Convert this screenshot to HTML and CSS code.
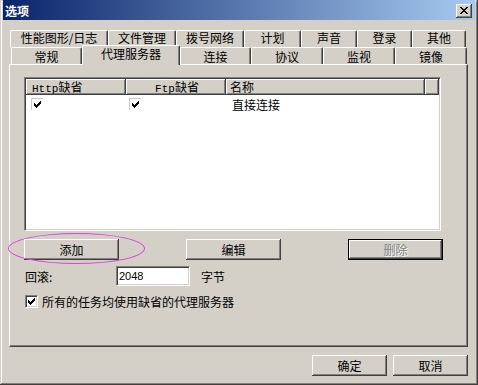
FILE: index.html
```html
<!DOCTYPE html>
<html>
<head>
<meta charset="utf-8">
<link rel="stylesheet" href="styles.css">
</head>
<body>
<div class="window">
  <div class="titlebar">
    <span class="title">选项</span>
    <span class="close">
      <svg width="8" height="7" viewBox="0 0 8 7" shape-rendering="crispEdges">
        <rect x="0" y="0" width="2" height="1"/><rect x="6" y="0" width="2" height="1"/>
        <rect x="1" y="1" width="2" height="1"/><rect x="5" y="1" width="2" height="1"/>
        <rect x="2" y="2" width="4" height="1"/>
        <rect x="3" y="3" width="2" height="1"/>
        <rect x="2" y="4" width="4" height="1"/>
        <rect x="1" y="5" width="2" height="1"/><rect x="5" y="5" width="2" height="1"/>
        <rect x="0" y="6" width="2" height="1"/><rect x="6" y="6" width="2" height="1"/>
      </svg>
    </span>
  </div>
  <div class="content">
    <div class="tabs">
      <div class="tabrow back">
        <div class="tab b1"><span class="tl">性能图形/日志</span></div>
        <div class="tab b2"><span class="tl">文件管理</span></div>
        <div class="tab b3"><span class="tl">拨号网络</span></div>
        <div class="tab b4"><span class="tl">计划</span></div>
        <div class="tab b5"><span class="tl">声音</span></div>
        <div class="tab b6"><span class="tl">登录</span></div>
        <div class="tab b7"><span class="tl">其他</span></div>
      </div>
      <div class="tabrow front">
        <div class="tab f1"><span class="tl">常规</span></div>
        <div class="tab f2 selected"><span class="tl">代理服务器</span></div>
        <div class="tab f3"><span class="tl">连接</span></div>
        <div class="tab f4"><span class="tl">协议</span></div>
        <div class="tab f5"><span class="tl">监视</span></div>
        <div class="tab f6"><span class="tl">镜像</span></div>
      </div>
    </div>
    <div class="panel">
      <div class="list">
        <div class="lhead">
          <div class="hc c1"><span class="mono">Http</span>缺省</div>
          <div class="hc c2"><span class="mono">Ftp</span>缺省</div>
          <div class="hc c3">名称</div>
          <div class="hc c4"></div>
        </div>
        <div class="lrow">
          <div class="rc c1 ck1">
            <svg class="ckimg" width="12" height="12" viewBox="0 0 12 12" shape-rendering="crispEdges">
              <rect x="0" y="0" width="12" height="12" fill="#fff"/>
              <rect x="0" y="0" width="12" height="1" fill="#c8c8c8"/>
              <rect x="0" y="0" width="1" height="12" fill="#c8c8c8"/>
              <g fill="#000" transform="translate(3,3)">
                <rect x="6" y="0" width="1" height="1"/><rect x="5" y="1" width="2" height="1"/>
                <rect x="0" y="2" width="1" height="1"/><rect x="4" y="2" width="3" height="1"/>
                <rect x="0" y="3" width="2" height="1"/><rect x="3" y="3" width="3" height="1"/>
                <rect x="0" y="4" width="5" height="1"/><rect x="1" y="5" width="3" height="1"/>
                <rect x="2" y="6" width="1" height="1"/>
              </g>
            </svg>
          </div>
          <div class="rc c2 ck2">
            <svg class="ckimg" width="12" height="12" viewBox="0 0 12 12" shape-rendering="crispEdges">
              <rect x="0" y="0" width="12" height="12" fill="#fff"/>
              <rect x="0" y="0" width="12" height="1" fill="#c8c8c8"/>
              <rect x="0" y="0" width="1" height="12" fill="#c8c8c8"/>
              <g fill="#000" transform="translate(3,3)">
                <rect x="6" y="0" width="1" height="1"/><rect x="5" y="1" width="2" height="1"/>
                <rect x="0" y="2" width="1" height="1"/><rect x="4" y="2" width="3" height="1"/>
                <rect x="0" y="3" width="2" height="1"/><rect x="3" y="3" width="3" height="1"/>
                <rect x="0" y="4" width="5" height="1"/><rect x="1" y="5" width="3" height="1"/>
                <rect x="2" y="6" width="1" height="1"/>
              </g>
            </svg>
          </div>
          <div class="rc c3 name">直接连接</div>
        </div>
      </div>
      <div class="btnrow">
        <div class="btn">添加</div>
        <div class="btn">编辑</div>
        <div class="btn default disabled"><span>删除</span></div>
      </div>
      <div class="field">
        <span class="flabel">回滚:</span>
        <span class="input">2048</span>
        <span class="unit">字节</span>
      </div>
      <div class="chkrow">
        <span class="checkbox">
          <svg width="7" height="7" viewBox="0 0 7 7" shape-rendering="crispEdges">
            <g fill="#000">
              <rect x="6" y="0" width="1" height="1"/><rect x="5" y="1" width="2" height="1"/>
              <rect x="0" y="2" width="1" height="1"/><rect x="4" y="2" width="3" height="1"/>
              <rect x="0" y="3" width="2" height="1"/><rect x="3" y="3" width="3" height="1"/>
              <rect x="0" y="4" width="5" height="1"/><rect x="1" y="5" width="3" height="1"/>
              <rect x="2" y="6" width="1" height="1"/>
            </g>
          </svg>
        </span>
        <span class="chklabel">所有的任务均使用缺省的代理服务器</span>
      </div>
    </div>
    <div class="footer">
      <div class="btn small">确定</div>
      <div class="btn small">取消</div>
    </div>
  </div>
  <div class="annot"></div>
</div>
</body>
</html>
```

FILE: styles.css
```css
html, body {
  margin: 0;
  padding: 0;
  background: #d4d0c8;
}

body {
  font-family: "Noto Sans CJK SC", "Liberation Sans", sans-serif;
  font-size: 12px;
  color: #000;
}

.window {
  position: relative;
  width: 478px;
  height: 385px;
  box-sizing: border-box;
  padding: 0 3px 3px 3px;
  background: #d4d0c8;
  box-shadow: inset -1px -1px #404040, inset 1px 1px #d4d0c8, inset -2px -2px #808080, inset 2px 2px #fff;
  overflow: hidden;
}

.titlebar {
  height: 20px;
  display: flex;
  align-items: center;
  justify-content: space-between;
  padding: 0 3px 0 2px;
  background: linear-gradient(to right, #0a246a, #a6caf0);
}

.title {
  color: #fff;
  font-weight: bold;
  font-size: 12px;
  line-height: 14px;
  padding-top: 2px;
}

.close {
  width: 16px;
  height: 14px;
  box-sizing: border-box;
  display: flex;
  align-items: center;
  justify-content: center;
  padding: 0 1px 1px 0;
  background: #d4d0c8;
  box-shadow: inset -1px -1px #404040, inset 1px 1px #fff, inset -2px -2px #808080;
  margin-top: 2px;
}

.content {
  margin-left: 6px;
  width: 459px;
}

.tabs {
  margin-top: 10px;
  height: 34px;
}

.tabrow {
  display: flex;
  height: 17px;
  align-items: flex-start;
}

.tabrow.back { margin-left: 1px; }
.tabrow.front { margin-left: 2px; }

.tab {
  box-sizing: border-box;
  height: 17px;
  flex: none;
  background: #d4d0c8;
  border-top: 1px solid #fff;
  border-left: 1px solid #fff;
  border-right: 1px solid #404040;
  box-shadow: inset -1px 0 #808080;
  border-radius: 2px 2px 0 0;
  text-align: center;
  padding-top: 1px;
  white-space: nowrap;
}

.tabrow.back .tab { padding-top: 0; }
.tabrow.front .tab { padding-top: 2px; }

.tl {
  display: block;
  line-height: 13px;
  height: 13px;
}

.b1 { width: 98px; }
.b2 { width: 68px; }
.b3 { width: 68px; }
.b4 { width: 57px; }
.b5 { width: 56px; }
.b6 { width: 55px; }
.b7 { width: 54px; }

.f1 { width: 71px; }
.f2 { width: 98px; }
.f3 { width: 71px; }
.f4 { width: 72px; }
.f5 { width: 72px; }
.f6 { width: 72px; }

.tabrow.front .tab.selected {
  position: relative;
  z-index: 2;
  height: 20px;
  margin-top: -2px;
  padding-top: 1px;
}

.panel {
  box-sizing: border-box;
  width: 459px;
  height: 283px;
  border-top: 1px solid #fff;
  border-left: 1px solid #fff;
  border-right: 1px solid #404040;
  border-bottom: 1px solid #404040;
  box-shadow: inset -1px -1px #808080;
  padding: 12px 0 0 14px;
}

.list {
  box-sizing: border-box;
  width: 417px;
  height: 154px;
  background: #fff;
  border: 1px solid;
  border-color: #808080 #fff #fff #808080;
  box-shadow: inset 1px 1px #404040, inset -1px -1px #d4d0c8;
  padding: 1px;
}

.lhead {
  display: flex;
  height: 16px;
}

.hc {
  box-sizing: border-box;
  height: 16px;
  background: #d4d0c8;
  box-shadow: inset -1px -1px #404040, inset 1px 1px #fff, inset -2px -2px #808080;
  line-height: 15px;
  white-space: nowrap;
}

.c1 { width: 100px; flex: none; }
.c2 { width: 100px; flex: none; }
.c3 { width: 199px; flex: none; }
.c4 { flex: 1; }

.lhead .c1 { padding-left: 6px; }
.lhead .c2 { text-align: center; padding-left: 2px; }
.lhead .c3 { padding-left: 4px; }

.mono {
  font-family: "Liberation Mono", monospace;
  font-size: 11px;
}

.lrow {
  display: flex;
  margin-top: 3px;
  height: 13px;
  align-items: flex-start;
}

.rc { height: 13px; }
.ck1 { padding-left: 5px; box-sizing: border-box; }
.ck2 { padding-left: 3px; box-sizing: border-box; }
.ckimg { display: block; }

.name {
  padding-left: 6px;
  line-height: 13px;
}

.btnrow {
  display: flex;
  justify-content: space-between;
  width: 419px;
  margin-top: 8px;
}

.btn {
  box-sizing: border-box;
  width: 95px;
  height: 21px;
  background: #d4d0c8;
  box-shadow: inset -1px -1px #404040, inset 1px 1px #fff, inset -2px -2px #808080;
  display: flex;
  align-items: center;
  justify-content: center;
  line-height: 14px;
}

.btn.default {
  border: 1px solid #000;
}

.btn.disabled {
  color: #808080;
  text-shadow: 1px 1px #fff;
}

.field {
  display: flex;
  align-items: center;
  height: 20px;
  margin-top: 6px;
}

.flabel {
  width: 92px;
  padding-left: 1px;
  box-sizing: border-box;
}

.input {
  box-sizing: border-box;
  width: 74px;
  height: 20px;
  background: #fff;
  border: 1px solid;
  border-color: #808080 #fff #fff #808080;
  box-shadow: inset 1px 1px #404040, inset -1px -1px #d4d0c8;
  font-family: "Liberation Sans", sans-serif;
  font-size: 11px;
  line-height: 18px;
  padding-left: 2px;
}

.unit {
  margin-left: 11px;
}

.chkrow {
  display: flex;
  align-items: center;
  margin-top: 9px;
  height: 13px;
}

.checkbox {
  box-sizing: border-box;
  width: 13px;
  height: 13px;
  margin-left: 1px;
  background: #fff;
  border: 1px solid;
  border-color: #808080 #fff #fff #808080;
  box-shadow: inset 1px 1px #404040, inset -1px -1px #d4d0c8;
  display: flex;
  align-items: center;
  justify-content: center;
}

.checkbox svg { display: block; }

.chklabel {
  margin-left: 4px;
}

.footer {
  display: flex;
  justify-content: flex-end;
  gap: 6px;
  margin-top: 8px;
}

.btn.small {
  width: 75px;
}

.annot {
  position: absolute;
  left: 8px;
  top: 233px;
  width: 137px;
  height: 31px;
  box-sizing: border-box;
  border: 1px solid #e040e0;
  border-radius: 50%;
  pointer-events: none;
}
```
